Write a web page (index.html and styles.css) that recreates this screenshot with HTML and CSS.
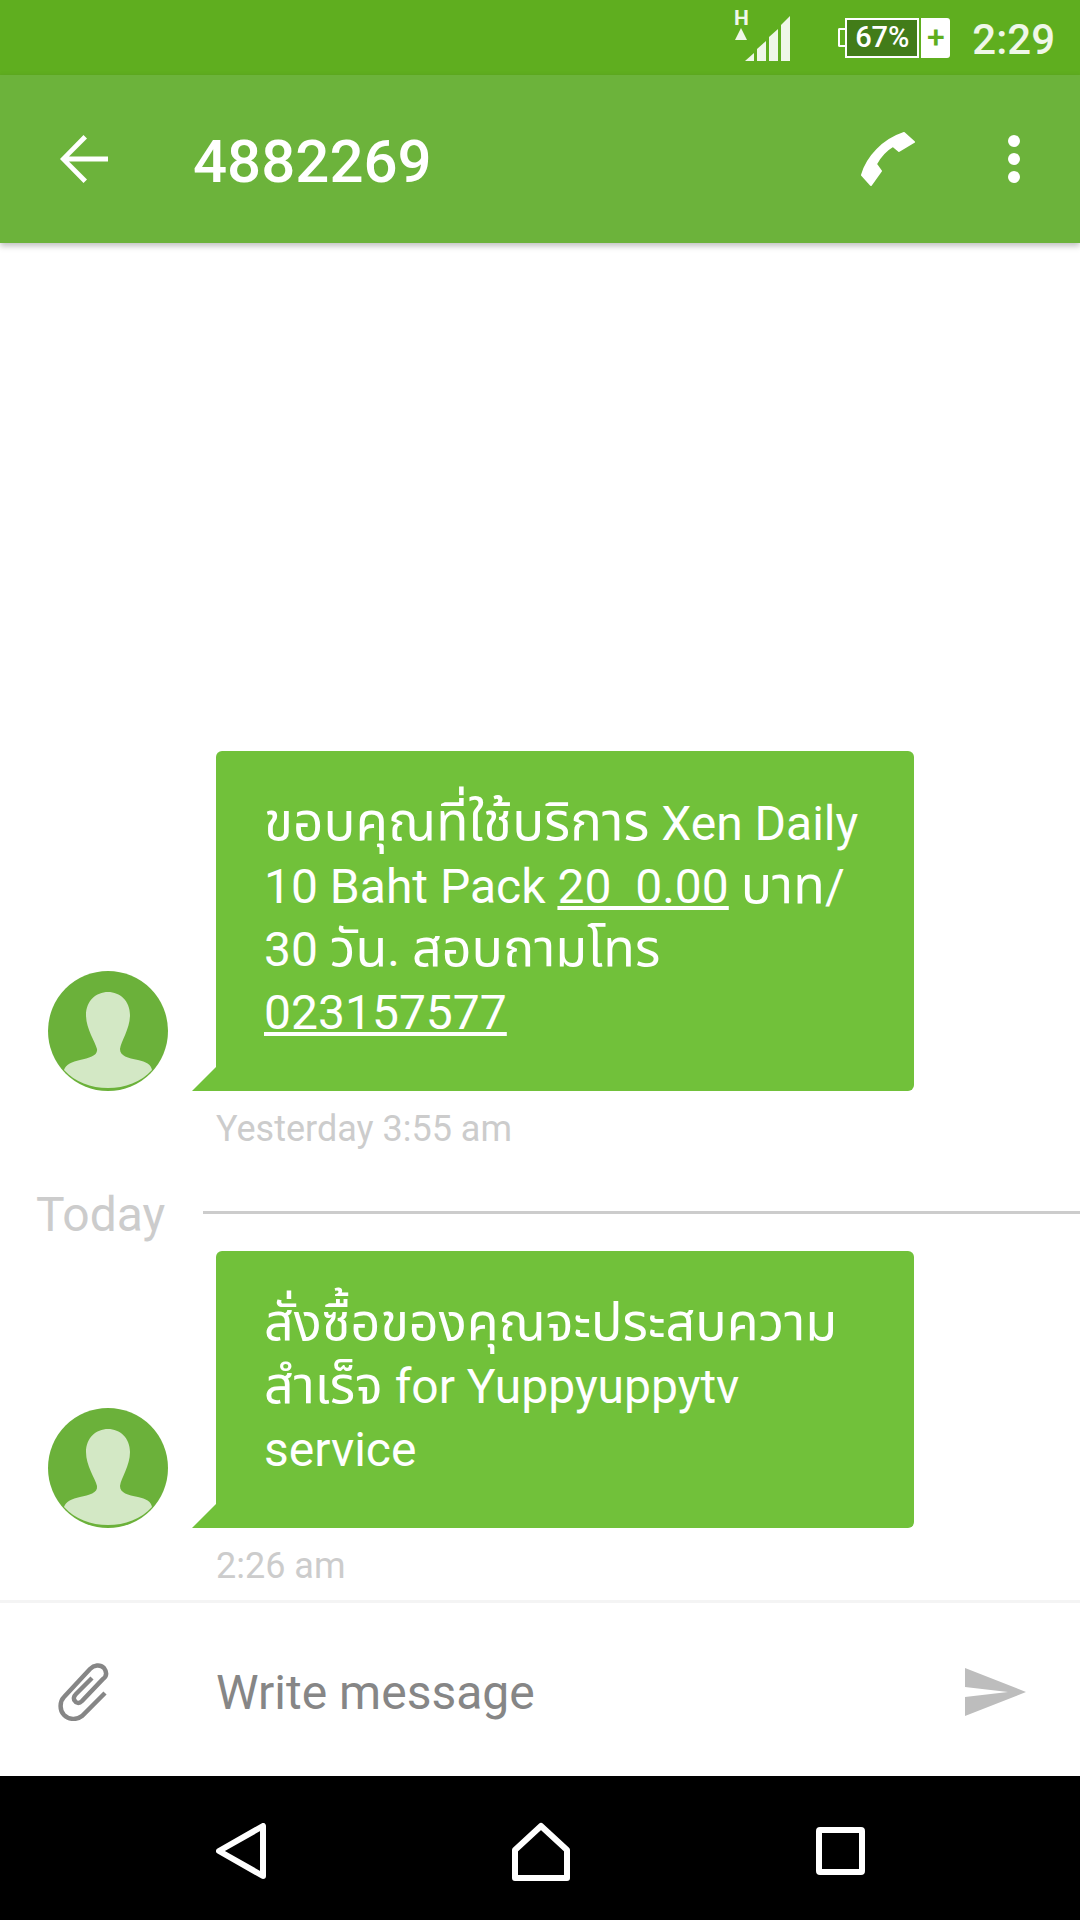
FILE: index.html
```html
<!DOCTYPE html>
<html lang="en">
<head>
    <meta charset="UTF-8">
    <meta name="viewport" content="width=device-width, initial-scale=1.0">
    <title>4882269</title>
    <link rel="stylesheet" href="styles.css">
</head>
<body>
    <div class="phone">
        <div class="status-bar">
            <div class="network">
                <span class="network-h">H</span>
                <svg class="network-up" viewBox="0 0 12 12"><path d="M6 0L12 12H0Z"/></svg>
            </div>
            <svg class="signal" viewBox="0 0 46 46">
                <path d="M9 37V45H0Z"/>
                <path d="M12 33L21 25V45H12Z"/>
                <path d="M24 21L33 13V45H24Z"/>
                <path d="M36 9L45 0V45H36Z"/>
            </svg>
            <div class="battery">
                <span class="battery-nub"></span>
                <span class="battery-level">67%</span>
                <span class="battery-plus">+</span>
            </div>
            <span class="clock">2:29</span>
        </div>

        <header class="toolbar">
            <svg class="back-icon" viewBox="0 0 48 48"><path d="M48 21.500H9L27 3.500 23.500 0 0 24 23.500 48 27 44.500 9 26.500H48Z"/></svg>
            <h1 class="title">4882269</h1>
            <svg class="call-icon" viewBox="0 0 54 54"><path d="M43 1L53 10 38 19 32 14C25 18 19 25 15 32L20 39 10 53 1 43C6 25 22 8 43 1Z"/></svg>
            <div class="more-icon"><span></span><span></span><span></span></div>
        </header>

        <main class="messages">
            <div class="message">
                <svg class="avatar" viewBox="0 0 120 120">
                    <circle cx="60" cy="60" r="60" fill="#6bb13a"/>
                    <path d="M60 21C72 21 82 30 82 44C82 58 73 70 72 78C72 85 80 87 90 89C98 91 103 93 104 99C93 111 77 117 60 117C43 117 27 111 16 99C18 93 24 91 32 89C41 87 50 85 49 78C47 70 38 58 38 44C38 30 48 21 60 21Z" fill="#d3e8c5"/>
                </svg>
                <div class="bubble">
                    <span class="thai thai-wide">ขอบคุณที่ใช้บริการ</span> Xen Daily<br>
                    10 Baht Pack <u>20&nbsp;&nbsp;0.00</u> <span class="thai">บาท</span>/<br>
                    30 <span class="thai">วัน</span>. <span class="thai">สอบถามโทร</span><br>
                    <u>023157577</u>
                </div>
            </div>
            <div class="timestamp">Yesterday 3:55 am</div>

            <div class="day-divider">
                <span>Today</span>
                <div class="day-line"></div>
            </div>

            <div class="message">
                <svg class="avatar" viewBox="0 0 120 120">
                    <circle cx="60" cy="60" r="60" fill="#6bb13a"/>
                    <path d="M60 21C72 21 82 30 82 44C82 58 73 70 72 78C72 85 80 87 90 89C98 91 103 93 104 99C93 111 77 117 60 117C43 117 27 111 16 99C18 93 24 91 32 89C41 87 50 85 49 78C47 70 38 58 38 44C38 30 48 21 60 21Z" fill="#d3e8c5"/>
                </svg>
                <div class="bubble">
                    <span class="thai">สั่งซื้อของคุณจะประสบความ</span><br>
                    <span class="thai">สำเร็จ</span> for Yuppyuppytv<br>
                    service
                </div>
            </div>
            <div class="timestamp">2:26 am</div>
        </main>

        <footer class="composer">
            <svg class="attach-icon" viewBox="0 0 54 58" fill="none" stroke="#868686" stroke-width="4.500">
                <path d="M48 30L25 53C20 57 12 57 7 52C2 47 3 38 7 34L33 6C37 2 43 1 47 5C50 9 50 13 46 16L25 38C22 41 19 40 18 38C16 36 17 33 19 31L35 15"/>
            </svg>
            <span class="placeholder">Write message</span>
            <svg class="send-icon" viewBox="0 0 61 48"><path d="M0 0L61 24 0 48V29L43 24 0 19Z"/></svg>
        </footer>

        <nav class="nav-bar">
            <svg class="nav-back" viewBox="0 0 50 56" fill="none"><path d="M47 3V53L3 28Z"/></svg>
            <svg class="nav-home" viewBox="0 0 58 59" fill="none"><path d="M3 56V28L29 4 55 28V56Z"/></svg>
            <svg class="nav-recent" viewBox="0 0 49 48" fill="none"><rect x="3" y="3" width="43" height="42" rx="1"/></svg>
        </nav>
    </div>
</body>
</html>
```

FILE: styles.css
```css
* {
    box-sizing: border-box;
}

body {
    margin: 0;
    background-color: #fff;
    font-family: Roboto, "Noto Sans", "Noto Sans Thai", "DejaVu Sans", sans-serif;
}

.phone {
    display: flex;
    flex-direction: column;
    width: 1080px;
    height: 1920px;
    overflow: hidden;
}

/* Status bar */
.status-bar {
    display: flex;
    align-items: center;
    justify-content: flex-end;
    height: 75px;
    padding-right: 25px;
    background-color: #5fae1f;
    color: #eff7e8;
}

.network {
    display: flex;
    flex-direction: column;
    align-items: center;
    width: 14px;
    margin: -25px -3px 0 0;
}

.network-h {
    font-size: 21px;
    font-weight: 700;
    line-height: 16px;
}

.network-up {
    width: 12px;
    height: 12px;
    margin-top: 2px;
    fill: #eff7e8;
}

.signal {
    width: 46px;
    height: 46px;
    margin: 2px 54px 0 0;
    fill: #eff7e8;
}

.battery {
    position: relative;
    display: flex;
    height: 40px;
    margin-right: 22px;
}

.battery-nub {
    position: absolute;
    left: -7px;
    top: 10px;
    width: 9px;
    height: 19px;
    border: 2px solid #fff;
    border-right: 0;
    border-radius: 2px 0 0 2px;
}

.battery-level {
    width: 74px;
    border: 2px solid #fff;
    background-color: #427c19;
    color: #fff;
    font-size: 29px;
    font-weight: 500;
    line-height: 35px;
    text-align: center;
}

.battery-plus {
    width: 29px;
    margin-left: 2px;
    border-radius: 0 3px 3px 0;
    background-color: #fff;
    color: #5fae1f;
    font-size: 32px;
    font-weight: 500;
    line-height: 38px;
    text-align: center;
}

.clock {
    padding-top: 4px;
    font-size: 42px;
    font-weight: 500;
}

/* Toolbar */
.toolbar {
    position: relative;
    z-index: 1;
    display: flex;
    align-items: center;
    height: 168px;
    background-color: #6cb33b;
    box-shadow: 0 3px 6px rgba(0, 0, 0, 0.25);
}

.back-icon {
    width: 48px;
    height: 48px;
    margin-left: 60px;
    fill: #fff;
}

.title {
    flex: 1;
    margin: 4px 0 0 85px;
    color: #fff;
    font-size: 60px;
    font-weight: 500;
}

.call-icon {
    width: 54px;
    height: 54px;
    stroke: #fff;
    stroke-width: 2;
    stroke-linejoin: round;
    fill: #fff;
}

.more-icon {
    display: flex;
    flex-direction: column;
    gap: 6px;
    margin: 0 60px 0 93px;
}

.more-icon span {
    width: 12px;
    height: 12px;
    border-radius: 50%;
    background-color: #fff;
}

/* Conversation */
.messages {
    display: flex;
    flex: 1;
    flex-direction: column;
    justify-content: flex-end;
    min-height: 0;
}

.message {
    display: flex;
    align-items: flex-end;
    padding-left: 48px;
}

.avatar {
    flex-shrink: 0;
    width: 120px;
    height: 120px;
}

.bubble {
    position: relative;
    width: 698px;
    margin-left: 48px;
    padding: 41px 30px 47px 48px;
    border-radius: 6px 6px 6px 0;
    background-color: #71c13a;
    color: #fff;
    font-size: 48px;
    line-height: 63px;
}

.bubble::before {
    content: "";
    position: absolute;
    left: -24px;
    bottom: 0;
    border-bottom: 24px solid #71c13a;
    border-left: 24px solid transparent;
}

/* The Thai face runs narrower than Roboto, so it gets a bigger size */
.thai {
    font-size: 52px;
    line-height: 1;
}

.thai-wide {
    font-size: 53px;
}

.timestamp {
    margin: 17px 0 0 216px;
    color: #cccccc;
    font-size: 36px;
    line-height: 43px;
}

.day-divider {
    display: flex;
    align-items: center;
    gap: 38px;
    margin: 34px 0 6px 36px;
    color: #cccccc;
    font-size: 48px;
    line-height: 60px;
}

.day-line {
    flex: 1;
    height: 3px;
    margin-bottom: 5px;
    background-color: #cccccc;
}

/* Composer */
.composer {
    display: flex;
    align-items: center;
    height: 176px;
    margin-top: 12px;
    padding-top: 5px;
    border-top: 3px solid #f4f4f4;
    color: #868686;
}

.attach-icon {
    width: 54px;
    height: 58px;
    margin-left: 57px;
}

.placeholder {
    flex: 1;
    margin-left: 105px;
    font-size: 48px;
}

.send-icon {
    width: 61px;
    height: 48px;
    margin-right: 54px;
    fill: #bdbdbd;
}

/* Navigation bar */
.nav-bar {
    display: flex;
    align-items: center;
    justify-content: center;
    gap: 246px;
    height: 144px;
    padding-top: 6px;
    background-color: #000;
}

.nav-bar svg {
    stroke: #fff;
    stroke-width: 6;
    stroke-linejoin: round;
}

.nav-back {
    width: 50px;
    height: 56px;
}

.nav-home {
    width: 58px;
    height: 59px;
}

.nav-recent {
    width: 49px;
    height: 48px;
}
```
